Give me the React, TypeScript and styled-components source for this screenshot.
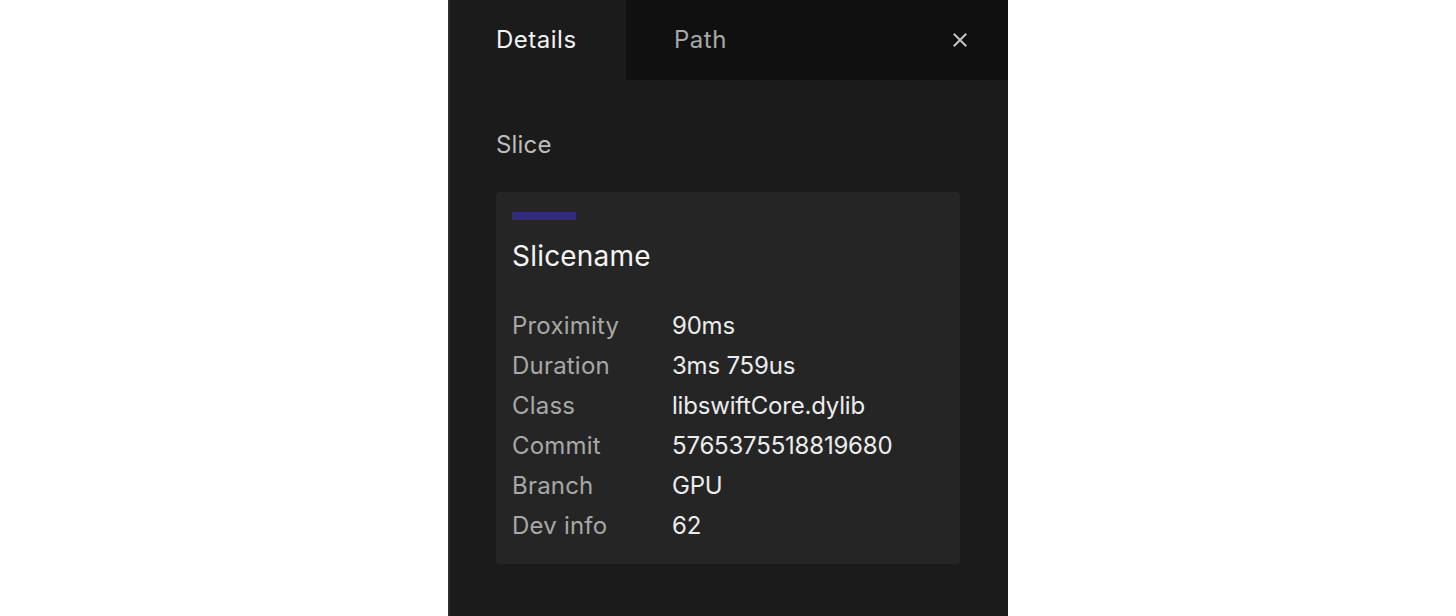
import React, { useState } from "react";
import styled, { createGlobalStyle } from "styled-components";

const Global = createGlobalStyle`
  html, body { margin: 0; padding: 0; background: #ffffff; }
  body { font-family: Inter, "Noto Sans", sans-serif; }
  * { box-sizing: border-box; }
`;

const Page = styled.div`
  display: flex;
  justify-content: center;
  min-height: 616px;
`;

const Panel = styled.aside`
  width: 560px;
  min-height: 616px;
  background: #1b1b1b;
  border-left: 2px solid #2c2c2c;
  display: flex;
  flex-direction: column;
`;

const TabBar = styled.div`
  display: flex;
  align-items: stretch;
  height: 80px;
  background: #101010;
  margin-left: -2px;
`;

const Tab = styled.button<{ $active?: boolean }>`
  border: none;
  margin: 0;
  padding: 0 0 2px 48px;
  width: 178px;
  text-align: left;
  font-family: Inter, "Noto Sans", sans-serif;
  font-size: 24px;
  font-weight: 400;
  letter-spacing: 0.5px;
  color: ${(p) => (p.$active ? "#f2f2f2" : "#a9a9a9")};
  background: ${(p) => (p.$active ? "#1b1b1b" : "transparent")};
  box-shadow: ${(p) => (p.$active ? "inset 2px 0 0 #2c2c2c" : "none")};
  cursor: pointer;
`;

const Spacer = styled.div`
  flex: 1;
`;

const CloseButton = styled.button`
  border: none;
  background: transparent;
  width: 96px;
  padding: 0;
  display: flex;
  align-items: center;
  justify-content: center;
  cursor: pointer;
`;

const Content = styled.div`
  padding: 49px 48px 0 46px;
`;

const SectionTitle = styled.div`
  font-size: 24px;
  line-height: 32px;
  color: #bdbdbd;
  letter-spacing: 0.2px;
`;

const Card = styled.div`
  margin-top: 31px;
  background: #252525;
  border-radius: 4px;
  padding: 20px 16px 18px 16px;
`;

const ColorBar = styled.div<{ $color: string }>`
  width: 64px;
  height: 8px;
  background: ${(p) => p.$color};
`;

const CardTitle = styled.div`
  margin-top: 18px;
  font-size: 28px;
  line-height: 36px;
  color: #f4f4f4;
  letter-spacing: 0.2px;
`;

const Rows = styled.dl`
  margin: 32px 0 0 0;
  display: grid;
  grid-template-columns: 160px 1fr;
`;

const Label = styled.dt`
  margin: 0;
  font-size: 24px;
  line-height: 40px;
  color: #a8a8a8;
  letter-spacing: 0.2px;
`;

const Value = styled.dd`
  margin: 0;
  font-size: 24px;
  line-height: 40px;
  color: #ececec;
  letter-spacing: -0.2px;
`;

const rows: [string, string][] = [
  ["Proximity", "90ms"],
  ["Duration", "3ms 759us"],
  ["Class", "libswiftCore.dylib"],
  ["Commit", "5765375518819680"],
  ["Branch", "GPU"],
  ["Dev info", "62"],
];

export default function App() {
  const [tab, setTab] = useState("Details");
  return (
    <>
      <Global />
      <Page>
        <Panel>
          <TabBar>
            <Tab $active={tab === "Details"} onClick={() => setTab("Details")}>
              Details
            </Tab>
            <Tab $active={tab === "Path"} onClick={() => setTab("Path")}>
              Path
            </Tab>
            <Spacer />
            <CloseButton aria-label="Close">
              <svg width="16" height="16" viewBox="0 0 16 16">
                <path
                  d="M2.5 2.5 L13.5 13.5 M13.5 2.5 L2.5 13.5"
                  stroke="#c4c4c4"
                  strokeWidth="2"
                  strokeLinecap="square"
                />
              </svg>
            </CloseButton>
          </TabBar>
          <Content>
            <SectionTitle>Slice</SectionTitle>
            <Card>
              <ColorBar $color="#342a7c" />
              <CardTitle>Slicename</CardTitle>
              <Rows>
                {rows.map(([k, v]) => (
                  <React.Fragment key={k}>
                    <Label>{k}</Label>
                    <Value>{v}</Value>
                  </React.Fragment>
                ))}
              </Rows>
            </Card>
          </Content>
        </Panel>
      </Page>
    </>
  );
}
